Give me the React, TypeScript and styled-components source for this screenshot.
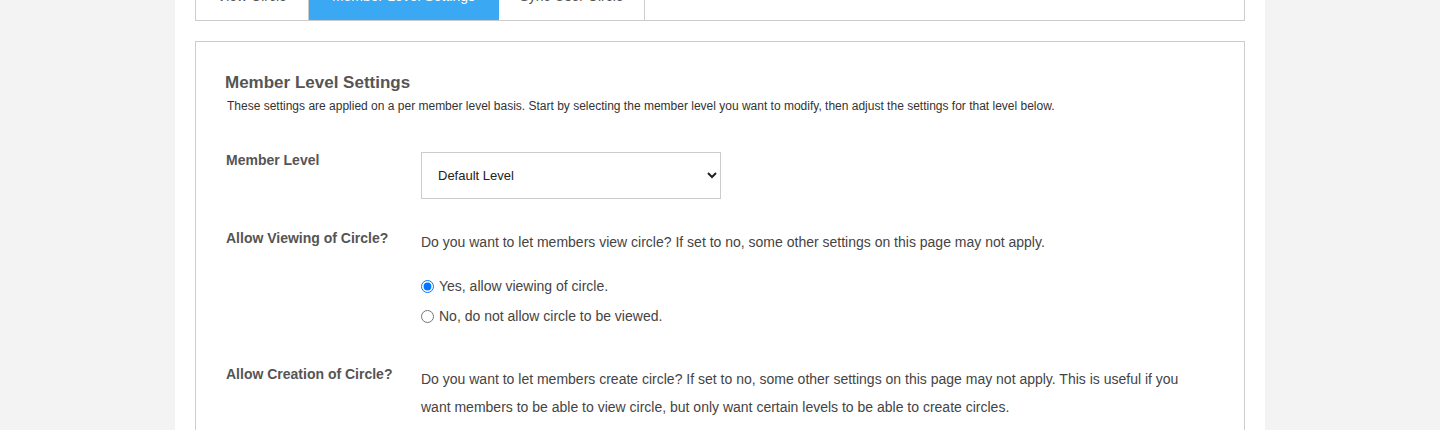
import styled, { createGlobalStyle } from "styled-components";

const GlobalStyle = createGlobalStyle`
    html, body {
        margin: 0;
        padding: 0;
        background: #f3f3f3;
        font-family: "Liberation Sans", Arial, sans-serif;
        color: #555;
    }
`

const Page = styled.div`
    width: 1050px;
    margin: 0 auto;
    padding: 0 20px 40px;
    background: #fff;
    min-height: 430px;
`

const TabBar = styled.div`
    display: flex;
    height: 45px;
    margin-top: -26px;
    border: 1px solid #ccc;
`

const Tab = styled.div<{ $active?: boolean; $width: number }>`
    width: ${p => p.$width}px;
    box-sizing: border-box;
    display: flex;
    align-items: center;
    justify-content: center;
    padding-bottom: 4px;
    font-size: 14px;
    border-right: 1px solid ${p => (p.$active ? "#3aa8f3" : "#ccc")};
    background: ${p => (p.$active ? "#3aa8f3" : "#fff")};
    color: ${p => (p.$active ? "#fff" : "#555")};
`

const SettingsBox = styled.div`
    margin-top: 20px;
    border: 1px solid #ccc;
    padding: 31px 30px 30px 29px;
`

const Title = styled.h3`
    margin: 0;
    font-size: 17px;
    font-weight: bold;
    color: #555;
`

const Intro = styled.p`
    margin: 6px 0 0 2px;
    font-size: 12px;
    color: #333;
`

const Row = styled.div<{ $top: number }>`
    display: flex;
    margin-top: ${p => p.$top}px;
`

const Label = styled.div`
    width: 195px;
    flex-shrink: 0;
    padding-left: 1px;
    font-size: 14px;
    font-weight: bold;
    color: #555;
`

const Field = styled.div`
    flex: 1;
    font-size: 14px;
    color: #444;
`

const Hint = styled.div<{ $drop: number }>`
    line-height: 28px;
    margin-top: ${p => p.$drop - 8}px;
    padding-right: 20px;
`

const Select = styled.select`
    width: 300px;
    height: 47px;
    border: 1px solid #ccc;
    background: #fff;
    padding: 0 12px;
    font-family: "Liberation Sans", Arial, sans-serif;
    font-size: 13px;
    color: #222;
    border-radius: 0;
`

const Options = styled.div`
    display: flex;
    flex-direction: column;
    gap: 14px;
    margin-top: 22px;
`

const Option = styled.label`
    display: flex;
    align-items: center;
    gap: 5px;
    font-size: 14px;
    color: #444;

    input {
        margin: 0;
        width: 13px;
        height: 13px;
    }
`

export default function App() {
    const tabs = [
        { name: "View Circle", width: 113 },
        { name: "Member Level Settings", width: 190, active: true },
        { name: "Sync User Circle", width: 146 },
    ]

    return (
        <>
            <GlobalStyle />
            <Page>
                <TabBar>
                    {tabs.map(tab => (
                        <Tab key={tab.name} $active={tab.active} $width={tab.width}>
                            {tab.name}
                        </Tab>
                    ))}
                </TabBar>

                <SettingsBox>
                    <Title>Member Level Settings</Title>
                    <Intro>
                        These settings are applied on a per member level basis. Start by selecting the member level you want to modify, then adjust the settings for that level below.
                    </Intro>

                    <Row $top={39}>
                        <Label>Member Level</Label>
                        <Field>
                            <Select defaultValue="default">
                                <option value="default">Default Level</option>
                                <option value="public">Public</option>
                            </Select>
                        </Field>
                    </Row>

                    <Row $top={31}>
                        <Label>Allow Viewing of Circle?</Label>
                        <Field>
                            <Hint $drop={6}>Do you want to let members view circle? If set to no, some other settings on this page may not apply.</Hint>
                            <Options>
                                <Option>
                                    <input type="radio" name="view" defaultChecked />
                                    Yes, allow viewing of circle.
                                </Option>
                                <Option>
                                    <input type="radio" name="view" />
                                    No, do not allow circle to be viewed.
                                </Option>
                            </Options>
                        </Field>
                    </Row>

                    <Row $top={42}>
                        <Label>Allow Creation of Circle?</Label>
                        <Field>
                            <Hint $drop={7}>Do you want to let members create circle? If set to no, some other settings on this page may not apply. This is useful if you want members to be able to view circle, but only want certain levels to be able to create circles.</Hint>
                        </Field>
                    </Row>
                </SettingsBox>
            </Page>
        </>
    )
}
